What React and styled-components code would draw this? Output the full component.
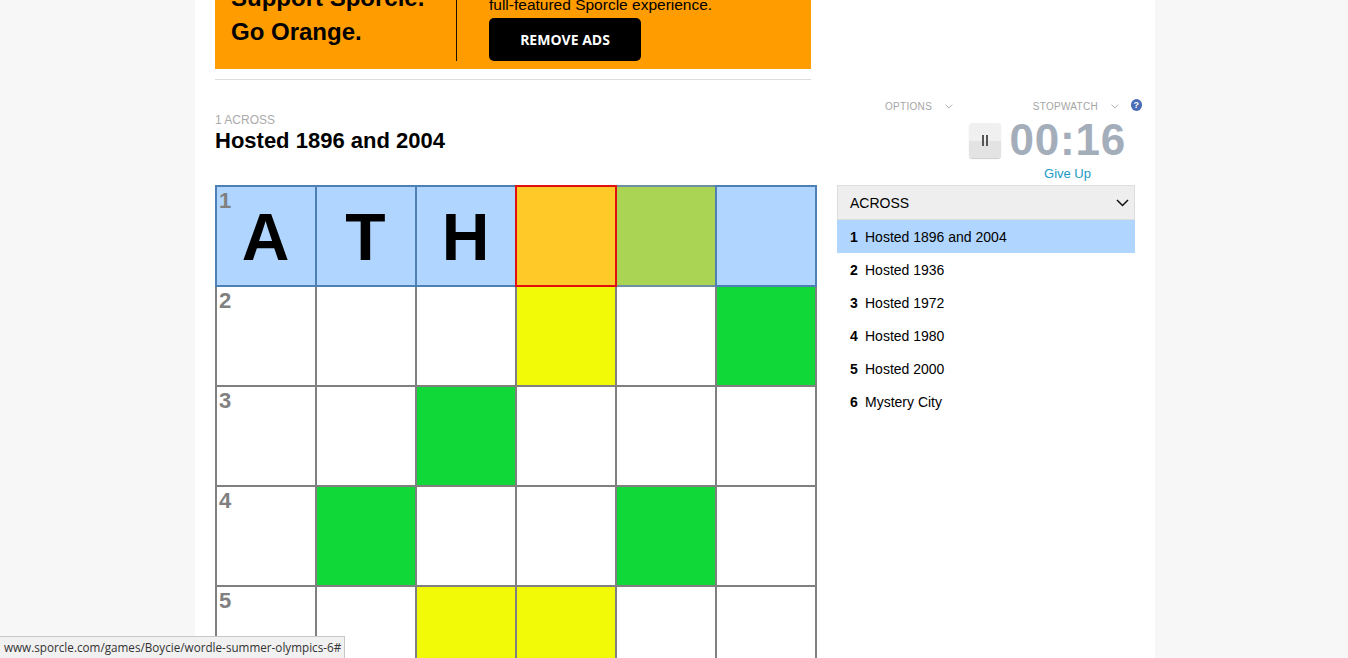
import React from "react";
import styled, { createGlobalStyle } from "styled-components";

const Global = createGlobalStyle`
  html, body { margin: 0; height: 658px; overflow: hidden; background: #f7f7f7; }
  body, button { font-family: "Liberation Sans", Arial, sans-serif; }
  * { box-sizing: border-box; }
`;

const Page = styled.div`
  width: 960px;
  height: 658px;
  margin-left: 195px;
  padding: 0 20px;
  background: #fff;
  overflow: hidden;
`;

const Ad = styled.section`
  width: 596px;
  height: 69px;
  background: #ff9c00;
  display: flex;
  align-items: flex-end;
  overflow: hidden;
`;

const AdPitch = styled.div`
  width: 241px;
  height: 100%;
  padding-left: 16px;
  padding-bottom: 20px;
  display: flex;
  flex-direction: column;
  justify-content: flex-end;
  flex: none;
  color: #000;
  font-size: 24px;
  font-weight: 700;
  line-height: 34px;
  white-space: nowrap;
`;

const AdDivider = styled.div`
  width: 1px;
  height: 61px;
  margin-bottom: 8px;
  background: #1a1000;
  flex: none;
`;

const AdOffer = styled.div`
  padding-left: 32px;
  padding-bottom: 8px;
  display: flex;
  flex-direction: column;
  font-size: 15.5px;
  color: #000;
  white-space: nowrap;
`;

const AdText = styled.div`
  line-height: 18px;
  height: 18px;
  margin-bottom: 4px;
`;

const RemoveAds = styled.button`
  width: 152px;
  height: 43px;
  border: 0;
  border-radius: 5px;
  background: #000;
  color: #fff;
  font-family: "Open Sans", sans-serif;
  font-size: 14px;
  font-weight: 700;
  padding: 0;
`;

const Rule = styled.hr`
  width: 596px;
  height: 1px;
  margin: 10px 0 0;
  border: 0;
  background: #ddd;
`;

const Head = styled.header`
  height: 105px;
  display: flex;
  justify-content: space-between;
`;

const Clue = styled.div`
  padding-top: 33px;
`;

const ClueLabel = styled.div`
  font-size: 12px;
  line-height: 14px;
  color: #aaa;
  text-transform: uppercase;
`;

const ClueTitle = styled.h1`
  margin: 0;
  font-size: 22px;
  line-height: 27px;
  font-weight: 700;
  color: #000;
`;

const Controls = styled.div`
  width: 307px;
  margin-right: -7px;
  padding-top: 19px;
  display: flex;
  flex-direction: column;
  align-items: flex-end;
`;

const Menus = styled.div`
  width: 100%;
  height: 14px;
  display: flex;
  align-items: center;
`;

const MenuLabel = styled.span`
  margin-left: ${(p) => p.$offset}px;
  font-size: 10px;
  letter-spacing: 0.3px;
  color: #a5a5a5;
`;

const Chevron = styled.svg`
  width: 8px;
  height: 5px;
  margin-left: 13px;
  fill: none;
  stroke: #a9a9a9;
  stroke-width: 1;
`;

const Help = styled.span`
  width: 12px;
  height: 12px;
  margin-left: 12px;
  margin-top: -2px;
  border-radius: 50%;
  background: #4a6db8;
  color: #fff;
  font-size: 9px;
  font-weight: 700;
  line-height: 12px;
  text-align: center;
`;

const Timer = styled.div`
  margin-top: 5px;
  margin-right: 16px;
  height: 44px;
  display: flex;
  align-items: center;
`;

const Pause = styled.button`
  width: 32px;
  height: 35px;
  margin-right: 8px;
  padding: 0;
  border: 0;
  border-radius: 3px;
  background: linear-gradient(#f0f0f0 0 50%, #e3e3e3 50% 100%);
  box-shadow: 0 1px 1px #ccc;
  display: flex;
  align-items: center;
  justify-content: center;
  gap: 2px;
`;

const PauseBar = styled.i`
  display: block;
  width: 2px;
  height: 11px;
  background: #555;
`;

const Clock = styled.div`
  font-size: 44px;
  line-height: 44px;
  font-weight: 700;
  color: #a4aebb;
  letter-spacing: 0.8px;
`;

const GiveUp = styled.a`
  margin-right: 51px;
  margin-top: 4px;
  font-size: 13px;
  line-height: 15px;
  color: #1a9bc4;
  text-decoration: none;
`;

const Body = styled.div`
  display: flex;
  align-items: flex-start;
`;

const Board = styled.div`
  width: 602px;
  padding: 2px;
  display: grid;
  grid-template-columns: repeat(6, 98px);
  grid-auto-rows: 98px;
  gap: 2px;
  background: #808080;
  flex: none;
`;

const fills = { w: "#fff", b: "#b0d6ff", o: "#ffca28", l: "#a9d454", y: "#f2fa08", g: "#10d838" };
const edges = { b: "#4f80b5", o: "#e01010", l: "#6f8fa0" };

const Cell = styled.div`
  position: relative;
  display: flex;
  align-items: center;
  justify-content: center;
  background: ${(p) => fills[p.$kind]};
  box-shadow: ${(p) => (edges[p.$kind] ? `0 0 0 2px ${edges[p.$kind]}` : "none")};
  z-index: ${(p) => (p.$kind === "o" ? 2 : edges[p.$kind] ? 1 : 0)};
  font-size: 66px;
  font-weight: 700;
  color: #000;
`;

const Num = styled.span`
  position: absolute;
  left: 2px;
  top: 1px;
  font-size: 22px;
  line-height: 25px;
  font-weight: 700;
  color: #808080;
`;

const Letter = styled.span`
  display: block;
  margin-top: 2px;
  margin-left: -1px;
  line-height: 66px;
`;

const Side = styled.aside`
  width: 298px;
  margin-left: 20px;
`;

const ListHead = styled.div`
  height: 35px;
  padding: 0 5px 0 12px;
  display: flex;
  align-items: center;
  justify-content: space-between;
  border: 1px solid #ddd;
  background: #eee;
  font-size: 14px;
  color: #000;
`;

const ListChevron = styled.svg`
  width: 13px;
  height: 8px;
  fill: none;
  stroke: #111;
  stroke-width: 1.5;
`;

const Item = styled.div`
  height: 33px;
  padding-left: 13px;
  display: flex;
  align-items: center;
  background: ${(p) => (p.$active ? "#b0d6ff" : "transparent")};
  font-size: 14px;
  color: #000;
`;

const ItemNum = styled.b`
  width: 15px;
  font-size: 14px;
`;

const Status = styled.div`
  position: fixed;
  left: 0;
  bottom: 0;
  width: 345px;
  height: 22px;
  padding: 0 0 0 4px;
  background: #f1f1f1;
  border: 1px solid #c8c8c8;
  border-left: 0;
  border-bottom: 0;
  font-family: "Open Sans", sans-serif;
  font-size: 11.7px;
  line-height: 21px;
  color: #333;
  white-space: nowrap;
`;

const rows = ["bbbolb", "wwwywg", "wwgwww", "wgwwgw", "wwyyww", "wwwwww"];
const letters = ["A", "T", "H"];
const clues = ["Hosted 1896 and 2004", "Hosted 1936", "Hosted 1972", "Hosted 1980", "Hosted 2000", "Mystery City"];

const ChevronIcon = () => (
  <Chevron viewBox="0 0 8 5"><path d="M.5.5 4 4 7.500.5" /></Chevron>
);

export default function App() {
  return (
    <>
      <Global />
      <Page>
        <Ad>
          <AdPitch>
            <div>Support Sporcle.</div>
            <div>Go Orange.</div>
          </AdPitch>
          <AdDivider />
          <AdOffer>
            <AdText>full-featured Sporcle experience.</AdText>
            <RemoveAds>REMOVE ADS</RemoveAds>
          </AdOffer>
        </Ad>
        <Rule />
        <Head>
          <Clue>
            <ClueLabel>1 Across</ClueLabel>
            <ClueTitle>Hosted 1896 and 2004</ClueTitle>
          </Clue>
          <Controls>
            <Menus>
              <MenuLabel $offset={50}>OPTIONS</MenuLabel>
              <ChevronIcon />
              <MenuLabel $offset={80}>STOPWATCH</MenuLabel>
              <ChevronIcon />
              <Help>?</Help>
            </Menus>
            <Timer>
              <Pause><PauseBar /><PauseBar /></Pause>
              <Clock>00:16</Clock>
            </Timer>
            <GiveUp href="#">Give Up</GiveUp>
          </Controls>
        </Head>
        <Body>
          <Board>
            {rows.flatMap((row, r) =>
              row.split("").map((kind, c) => (
                <Cell key={`${r}-${c}`} $kind={kind}>
                  {c === 0 && <Num>{r + 1}</Num>}
                  {r === 0 && letters[c] && <Letter>{letters[c]}</Letter>}
                </Cell>
              ))
            )}
          </Board>
          <Side>
            <ListHead>
              ACROSS
              <ListChevron viewBox="0 0 13 8"><path d="M1 1l5.500 5.500L12 1" /></ListChevron>
            </ListHead>
            {clues.map((clue, i) => (
              <Item key={clue} $active={i === 0}>
                <ItemNum>{i + 1}</ItemNum>
                {clue}
              </Item>
            ))}
          </Side>
        </Body>
        <Status>www.sporcle.com/games/Boycie/wordle-summer-olympics-6#</Status>
      </Page>
    </>
  );
}
